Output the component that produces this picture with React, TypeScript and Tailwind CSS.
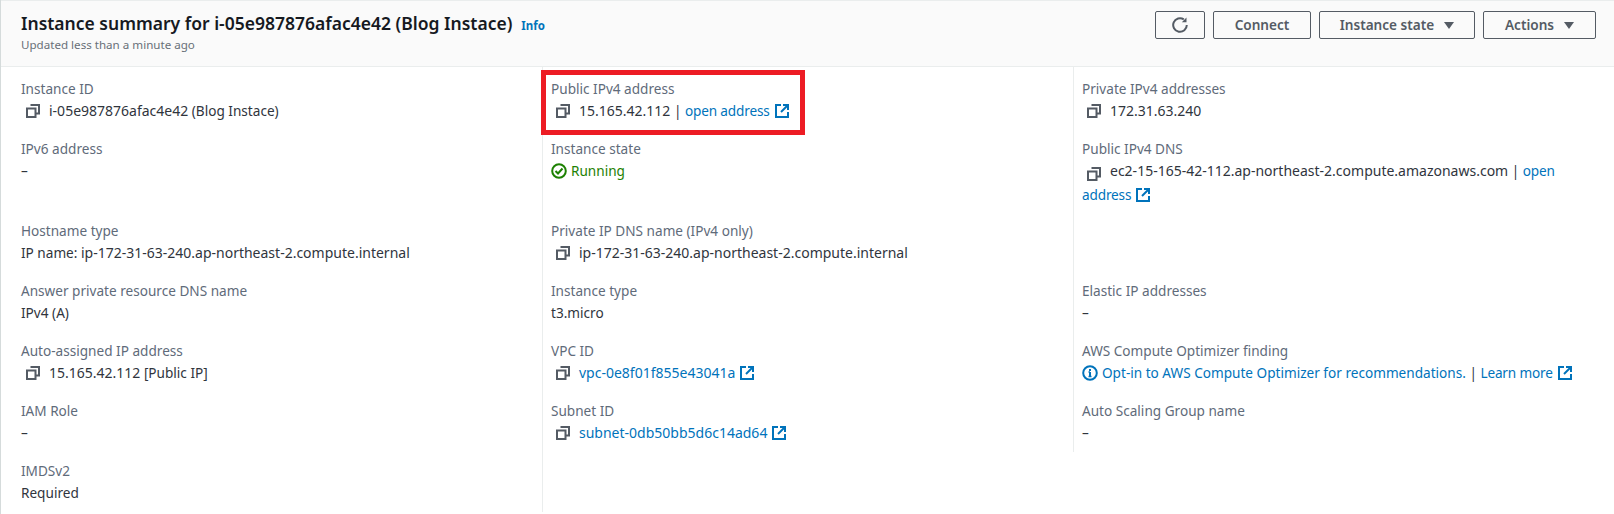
import React from "react";

function Copy() {
  return (
    <svg width="14" height="14" viewBox="0 0 14 14" fill="none" stroke="#545b64" strokeWidth="2" className="shrink-0 inline-block">
      <path d="M4.5 1h8.5v8.5h-3" />
      <path d="M1 4.5h8.5V13H1z" />
    </svg>
  );
}

function Ext() {
  return (
    <svg width="14" height="14" viewBox="0 0 14 14" fill="none" stroke="#0073bb" strokeWidth="2" className="inline-block ml-[5px] align-[-2px]">
      <path d="M6 1H1v12h12V8" />
      <path d="M8 1h5v5" />
      <path d="M13 1 6 8" />
    </svg>
  );
}

function Caret() {
  return (
    <svg width="10" height="7" viewBox="0 0 10 7" fill="#545b64" className="ml-[10px]">
      <path d="M0 0h10L5 7z" />
    </svg>
  );
}

const Link = ({ children }: { children: React.ReactNode }) => <span className="text-[#0073bb]">{children}</span>;

const Small = ({ children }: { children: React.ReactNode }) => <span className="tracking-[-0.15px] text-[#0073bb]">{children}</span>;

const Num = ({ children }: { children: React.ReactNode }) => <span className="text-[14px]">{children}</span>;

const Dash = () => <span>–</span>;

function Cell({ label, border, h, children }: { label?: string; border?: boolean; h: string; children?: React.ReactNode }) {
  return (
    <div className={`${h} pt-[12px] text-[13.6px] leading-[22px] ${border ? "border-l border-[#eaeded] pl-[8px] pr-[20px]" : "pl-[20px] pr-[8px]"}`}>
      {label && <div className="text-[#5f6b7a] h-[22px]">{label}</div>}
      {children && <div className="text-[#30353d]">{children}</div>}
    </div>
  );
}

function CopyVal({ children }: { children: React.ReactNode }) {
  return (
    <div className="flex items-center pl-[5px] gap-[9px]">
      <Copy />
      <div>{children}</div>
    </div>
  );
}

function Btn({ children, className }: { children: React.ReactNode; className: string }) {
  return (
    <div className={`h-[28px] flex items-center justify-center border border-[#545b64] rounded-[2px] text-[13.6px] font-semibold text-[#545b64] ${className}`}>
      {children}
    </div>
  );
}

export default function App() {
  return (
    <div className="relative w-[1614px] h-[514px] bg-white overflow-hidden border-l border-[#d5dbdb] font-['Noto_Sans',sans-serif]">
      <div className="h-[65px] box-content bg-[#fafafa] border-t border-b border-[#eaeded] flex justify-between pl-[20px] pr-[18px] -mb-px">
        <div className="pt-[9px]">
          <div className="flex items-baseline">
            <span className="text-[17.5px] leading-[26px] font-semibold text-[#16191f]">Instance summary for i-05e987876afac4e42 (Blog Instace)</span>
            <span className="text-[11.5px] font-bold text-[#0073bb] ml-[9px]">Info</span>
          </div>
          <div className="text-[11.6px] leading-[18px] text-[#687078]">Updated less than a minute ago</div>
        </div>
        <div className="flex gap-[8px] pt-[10px]">
          <Btn className="w-[50px]">
            <svg width="16" height="16" viewBox="0 0 16 16" fill="none" stroke="#545b64" strokeWidth="2">
              <path d="M14.8 8a6.8 6.8 0 1 1-3-5.6" />
              <path d="M14.5 0.5v4.7H9.8z" fill="#545b64" stroke="none" />
            </svg>
          </Btn>
          <Btn className="w-[98px]">Connect</Btn>
          <Btn className="w-[156px]">Instance state<Caret /></Btn>
          <Btn className="w-[113px]">Actions<Caret /></Btn>
        </div>
      </div>
      <div className="grid grid-cols-[541px_531px_1fr]">
        <div>
          <Cell h="h-[60px]" label="Instance ID"><CopyVal><Num>i-05e987876afac4e42</Num> (Blog Instace)</CopyVal></Cell>
          <Cell h="h-[82px]" label="IPv6 address"><Dash /></Cell>
          <Cell h="h-[60px]" label="Hostname type">IP name: <Num>ip-172-31-63-240.ap-northeast-2.compute.internal</Num></Cell>
          <Cell h="h-[60px]" label="Answer private resource DNS name">IPv4 (A)</Cell>
          <Cell h="h-[60px]" label="Auto-assigned IP address"><CopyVal><Num>15.165.42.112</Num> [Public IP]</CopyVal></Cell>
          <Cell h="h-[60px]" label="IAM Role"><Dash /></Cell>
          <Cell h="h-[60px]" label="IMDSv2">Required</Cell>
        </div>
        <div>
          <Cell border h="h-[60px]" label="Public IPv4 address"><CopyVal><Num>15.165.42.112</Num> | <Small>open address</Small><Ext /></CopyVal></Cell>
          <Cell border h="h-[82px]" label="Instance state">
            <span className="flex items-center gap-[4px] text-[#1d8102]">
              <svg width="16" height="16" viewBox="0 0 16 16" fill="none" stroke="#1d8102" strokeWidth="2">
                <circle cx="8" cy="8" r="6.8" />
                <path d="M4.5 8 7 10.5 11.5 5.5" />
              </svg>
              Running
            </span>
          </Cell>
          <Cell border h="h-[60px]" label="Private IP DNS name (IPv4 only)"><CopyVal><Num>ip-172-31-63-240.ap-northeast-2.compute.internal</Num></CopyVal></Cell>
          <Cell border h="h-[60px]" label="Instance type">t3.micro</Cell>
          <Cell border h="h-[60px]" label="VPC ID"><CopyVal><Link><Num>vpc-0e8f01f855e43041a</Num></Link><Ext /></CopyVal></Cell>
          <Cell border h="h-[60px]" label="Subnet ID"><CopyVal><Link><Num>subnet-0db50bb5d6c14ad64</Num></Link><Ext /></CopyVal></Cell>
          <Cell border h="h-[64px]" />
        </div>
        <div>
          <Cell border h="h-[60px]" label="Private IPv4 addresses"><CopyVal><Num>172.31.63.240</Num></CopyVal></Cell>
          <Cell border h="h-[82px]" label="Public IPv4 DNS">
            <div className="pr-[30px]">
              <span className="inline-block ml-[5px] mr-[9px] align-[-2px]"><Copy /></span>
              <Num>ec2-15-165-42-112.ap-northeast-2.compute.amazonaws.com</Num> | <Small>open address</Small><Ext />
            </div>
          </Cell>
          <Cell border h="h-[60px]" />
          <Cell border h="h-[60px]" label="Elastic IP addresses"><Dash /></Cell>
          <Cell border h="h-[60px]" label="AWS Compute Optimizer finding">
            <div className="flex items-center gap-[4px]">
              <svg width="16" height="16" viewBox="0 0 16 16" fill="none" stroke="#0073bb" strokeWidth="2" className="shrink-0">
                <circle cx="8" cy="8" r="6.8" />
                <path d="M8 7v4.5" />
                <path d="M8 4v2" />
                <path d="M6.5 7H8" strokeWidth="1.5" />
                <path d="M6.5 11.5h3" strokeWidth="1.5" />
              </svg>
              <div><Link>Opt-in to AWS Compute Optimizer for recommendations.</Link> | <Small>Learn more</Small><Ext /></div>
            </div>
          </Cell>
          <Cell border h="h-[64px]" label="Auto Scaling Group name"><Dash /></Cell>
        </div>
      </div>
      <div className="absolute left-[540px] top-[70px] w-[264px] h-[65px] border-[5px] border-[#ed1c24]" />
    </div>
  );
}
